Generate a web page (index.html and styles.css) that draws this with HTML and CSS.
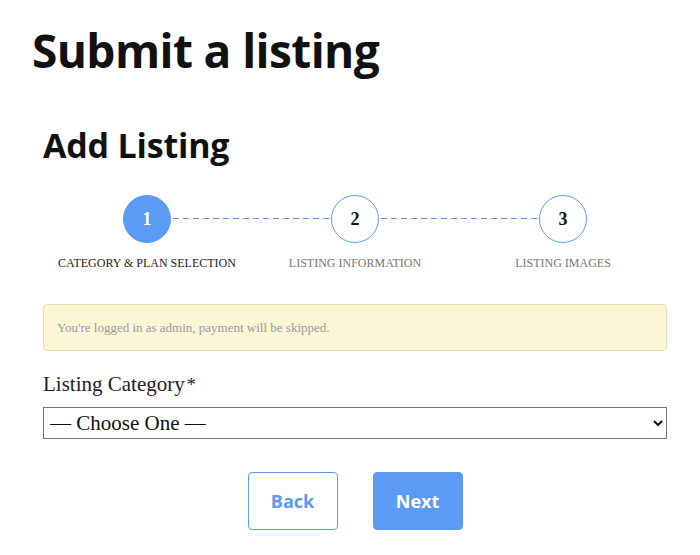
FILE: index.html
```html
<!DOCTYPE html>
<html>
<head>
<meta charset="utf-8">
<link rel="stylesheet" href="styles.css">
</head>
<body>
<div class="page">
  <h1 class="title">Submit a listing</h1>
  <div class="form-wrap">
    <h2 class="subtitle">Add Listing</h2>
    <div class="steps">
      <div class="step active">
        <div class="circle">1</div>
        <div class="step-label">CATEGORY &amp; PLAN SELECTION</div>
      </div>
      <div class="step">
        <div class="circle">2</div>
        <div class="step-label">LISTING INFORMATION</div>
      </div>
      <div class="step last">
        <div class="circle">3</div>
        <div class="step-label">LISTING IMAGES</div>
      </div>
    </div>
    <div class="alert">You're logged in as admin, payment will be skipped.</div>
    <label class="field-label">Listing Category<span class="req">*</span></label>
    <select class="select">
      <option>— Choose One —</option>
    </select>
    <div class="actions">
      <button class="btn btn-back">Back</button>
      <button class="btn btn-next">Next</button>
    </div>
  </div>
</div>
</body>
</html>
```
FILE: styles.css
```css
html, body {
  margin: 0;
  padding: 0;
  background: #fff;
}
body {
  font-family: "Liberation Serif", serif;
  color: #111;
}
.page {
  padding: 20px 32px 0 32px;
}
.title {
  margin: 0;
  font-family: "Open Sans", "Noto Sans", sans-serif;
  font-weight: 700;
  font-size: 46px;
  line-height: 60px;
  letter-spacing: -0.6px;
  color: #111;
}
.form-wrap {
  padding: 0 1px 0 11px;
}
.subtitle {
  margin: 48px 0 0 0;
  font-family: "Open Sans", "Noto Sans", sans-serif;
  font-weight: 700;
  font-size: 34px;
  line-height: 34px;
  letter-spacing: -0.2px;
  color: #111;
}
.steps {
  display: grid;
  grid-template-columns: repeat(3, 1fr);
  margin-top: 33px;
}
.step {
  position: relative;
  display: flex;
  flex-direction: column;
  align-items: center;
}
.step:not(.last)::after {
  content: "";
  position: absolute;
  top: 23px;
  left: calc(50% + 26px);
  width: calc(100% - 52px);
  height: 1px;
  background-image: linear-gradient(to right, #5b9bf5 6px, rgba(91, 155, 245, 0) 6px);
  background-size: 10px 1px;
  background-repeat: repeat-x;
}
.circle {
  width: 46px;
  height: 46px;
  border-radius: 50%;
  border: 1px solid #5b9bf5;
  background: #fff;
  display: flex;
  align-items: center;
  justify-content: center;
  font-size: 18px;
  font-weight: 700;
  color: #111;
}
.step.active .circle {
  background: #5b9bf5;
  color: #fff;
}
.step-label {
  margin-top: 13px;
  font-size: 12px;
  line-height: 14px;
  color: #777;
}
.step.active .step-label {
  color: #222;
}
.alert {
  margin-top: 34px;
  height: 47px;
  box-sizing: border-box;
  background: #fcf6d6;
  border: 1px solid #e6dcac;
  border-radius: 4px;
  padding: 0 13px;
  display: flex;
  align-items: center;
  font-size: 13px;
  color: #999;
}
.field-label {
  display: block;
  margin-top: 21px;
  font-size: 21px;
  line-height: 24px;
  color: #222;
}
.req {
  font-size: 18px;
  margin-left: 2px;
}
.select {
  display: block;
  width: 100%;
  margin-top: 10px;
  height: 32px;
  font-family: "Liberation Serif", serif;
  font-size: 21px;
  color: #111;
  border: 1px solid #767676;
  border-radius: 0;
  background: #fff;
  padding: 0 2px;
}
.actions {
  display: flex;
  justify-content: center;
  gap: 35px;
  margin-top: 33px;
}
.btn {
  width: 90px;
  height: 58px;
  border-radius: 4px;
  font-family: "Open Sans", "Noto Sans", sans-serif;
  font-weight: 700;
  font-size: 18px;
  border: 1px solid #5b9bf5;
  cursor: pointer;
}
.btn-back {
  background: #fff;
  color: #5b9bf5;
}
.btn-next {
  background: #5b9bf5;
  color: #fff;
}
```
